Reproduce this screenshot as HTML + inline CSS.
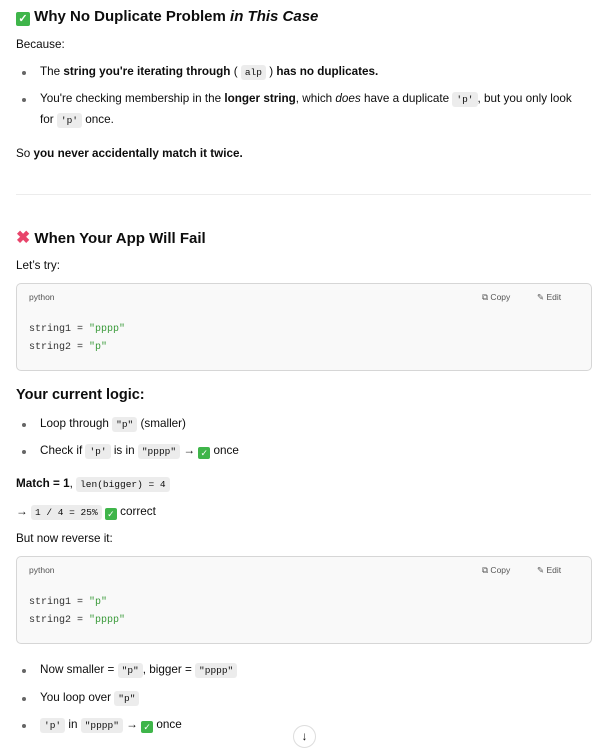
<!DOCTYPE html>
<html><head><meta charset="utf-8"><style>
*{margin:0;padding:0;box-sizing:border-box}
body{width:601px;height:746px;overflow:hidden;background:#fff;font-family:"Liberation Sans",sans-serif;color:#0d0d0d;font-size:11.7px;position:relative}
.l{position:absolute;left:16px;line-height:16px;white-space:nowrap}
.b{left:40px}
.b:before{content:"";position:absolute;left:-18px;top:7px;width:4px;height:4px;border-radius:50%;background:#666}
h{position:absolute;left:16px;font-size:15px;line-height:20px;font-weight:bold;white-space:nowrap}
code{font-family:"Liberation Mono",monospace;font-size:9.5px;background:#ececec;border-radius:3px;padding:2px 4px}
.ck{display:inline-block;width:12px;height:12px;background:#3fb54a;border-radius:2px;color:#fff;font-size:9px;line-height:12px;text-align:center;vertical-align:-2px}
.box{position:absolute;left:16px;width:576px;height:88px;background:#f9f9f9;border:1px solid #d6d6d6;border-radius:5px}
.box .py{position:absolute;left:12px;top:8px;font-size:8.5px;color:#555}
.box .cp{position:absolute;left:465px;top:8px;font-size:8.5px;color:#555}
.box .ed{position:absolute;left:520px;top:8px;font-size:8.5px;color:#555}
.box pre{position:absolute;left:12px;top:37px;font-family:"Liberation Mono",monospace;font-size:10px;line-height:18px;color:#333}
.s{color:#3a9a3a}
b{font-weight:bold}
</style></head><body>
<h style="top:7px"><span class="ck" style="width:14px;height:14px;line-height:14px;font-size:11px;vertical-align:-1px">✓</span> Why No Duplicate Problem <i>in This Case</i></h>
<div class="l" style="top:37px">Because:</div>
<div class="l b" style="top:64px">The <b>string you're iterating through</b> ( <code>alp</code> ) <b>has no duplicates.</b></div>
<div class="l b" style="top:91px">You're checking membership in the <b>longer string</b>, which <i>does</i> have a duplicate <code>'p'</code>, but you only look</div>
<div class="l" style="left:40px;top:112px">for <code>'p'</code> once.</div>
<div class="l" style="top:146px">So <b>you never accidentally match it twice.</b></div>
<div style="position:absolute;left:16px;top:194px;width:575px;height:1px;background:#ececec"></div>
<h style="top:228px"><span style="color:#e8456b;font-size:17px">✖</span> When Your App Will Fail</h>
<div class="l" style="top:258px">Let’s try:</div>
<div class="box" style="top:283px"><span class="py">python</span><span class="cp">⧉ Copy</span><span class="ed">✎ Edit</span><pre>string1 = <span class="s">"pppp"</span>
string2 = <span class="s">"p"</span></pre></div>
<h style="top:385px;font-size:14.5px">Your current logic:</h>
<div class="l b" style="top:416px">Loop through <code>"p"</code> (smaller)</div>
<div class="l b" style="top:443px">Check if <code>'p'</code> is in <code>"pppp"</code> → <span class="ck">✓</span> once</div>
<div class="l" style="top:476px"><b>Match = 1</b>, <code>len(bigger) = 4</code></div>
<div class="l" style="top:504px">→ <code>1 / 4 = 25%</code> <span class="ck">✓</span> correct</div>
<div class="l" style="top:531px">But now reverse it:</div>
<div class="box" style="top:556px"><span class="py">python</span><span class="cp">⧉ Copy</span><span class="ed">✎ Edit</span><pre>string1 = <span class="s">"p"</span>
string2 = <span class="s">"pppp"</span></pre></div>
<div class="l b" style="top:662px">Now smaller = <code>"p"</code>, bigger = <code>"pppp"</code></div>
<div class="l b" style="top:690px">You loop over <code>"p"</code></div>
<div class="l b" style="top:717px"><code>'p'</code> in <code>"pppp"</code> → <span class="ck">✓</span> once</div>
<div style="position:absolute;left:293px;top:725px;width:23px;height:23px;border:1px solid #ddd;border-radius:50%;background:#fff;text-align:center;line-height:21px;font-size:12px">↓</div>
</body></html>
